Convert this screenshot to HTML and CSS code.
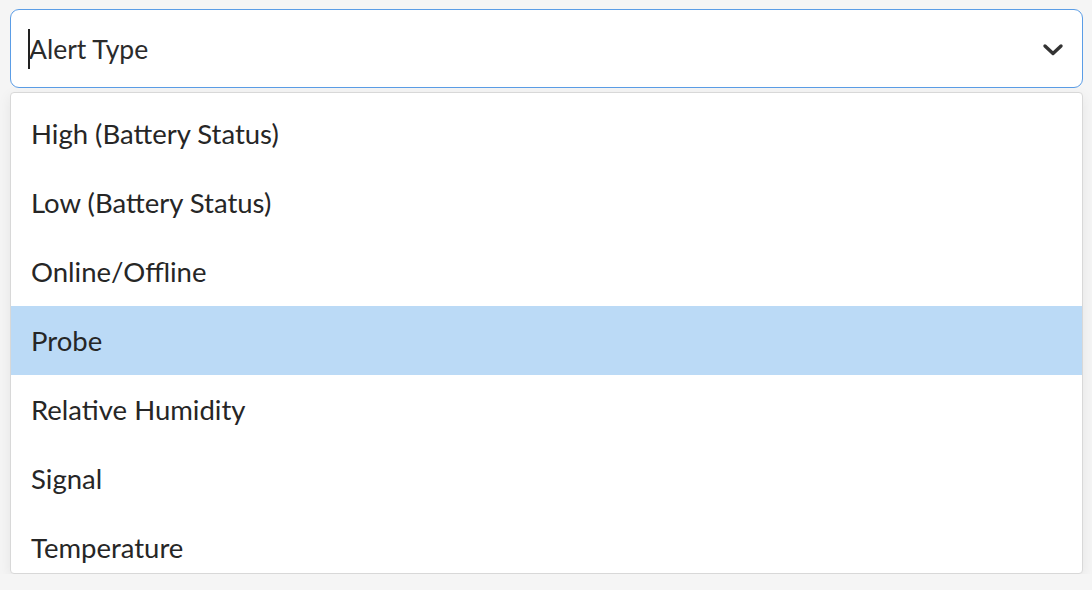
FILE: index.html
```html
<!DOCTYPE html>
<html>
<head>
<meta charset="utf-8">
<link rel="stylesheet" href="styles.css">
</head>
<body>
<div class="wrap">
  <div class="select">
    <div class="value"><span class="caret"></span>Alert Type</div>
    <svg class="chevron" width="22" height="14" viewBox="0 0 22 14"><path d="M3 3 L11 10.5 L19 3" fill="none" stroke="#333" stroke-width="3.4" stroke-linecap="round" stroke-linejoin="round"/></svg>
  </div>
  <div class="menu">
    <div class="option">High (Battery Status)</div>
    <div class="option">Low (Battery Status)</div>
    <div class="option">Online/Offline</div>
    <div class="option active">Probe</div>
    <div class="option">Relative Humidity</div>
    <div class="option">Signal</div>
    <div class="option">Temperature</div>
  </div>
</div>
</body>
</html>
```
FILE: styles.css
```css
html, body {
  margin: 0;
  padding: 0;
  background: #f5f5f5;
  font-family: Lato, "Liberation Sans", sans-serif;
}
.wrap {
  padding: 9px 9px 0 10px;
}
.select {
  height: 77px;
  border: 1px solid #5b9de6;
  border-radius: 9px;
  background: #fff;
  display: flex;
  align-items: center;
  justify-content: space-between;
  padding: 0 18px 0 17px;
}
.value {
  font-size: 26.5px;
  color: #2b2b2b;
  display: flex;
  align-items: center;
}
.caret {
  display: inline-block;
  width: 2px;
  height: 40px;
  background: #222;
  margin-right: -1px;
}
.chevron {
  display: block;
  margin-top: 2px;
}
.menu {
  margin-top: 4px;
  height: 474px;
  padding-top: 6px;
  border: 1px solid #d8d8d8;
  border-radius: 4px;
  background: #fff;
  box-shadow: 0 4px 14px rgba(0,0,0,0.07);
  overflow: hidden;
}
.option {
  height: 69px;
  display: flex;
  align-items: center;
  padding-left: 20px;
  padding-bottom: 1px;
  box-sizing: border-box;
  font-size: 27.5px;
  color: #262626;
}
.option.active {
  background: #bbdaf6;
}
```
